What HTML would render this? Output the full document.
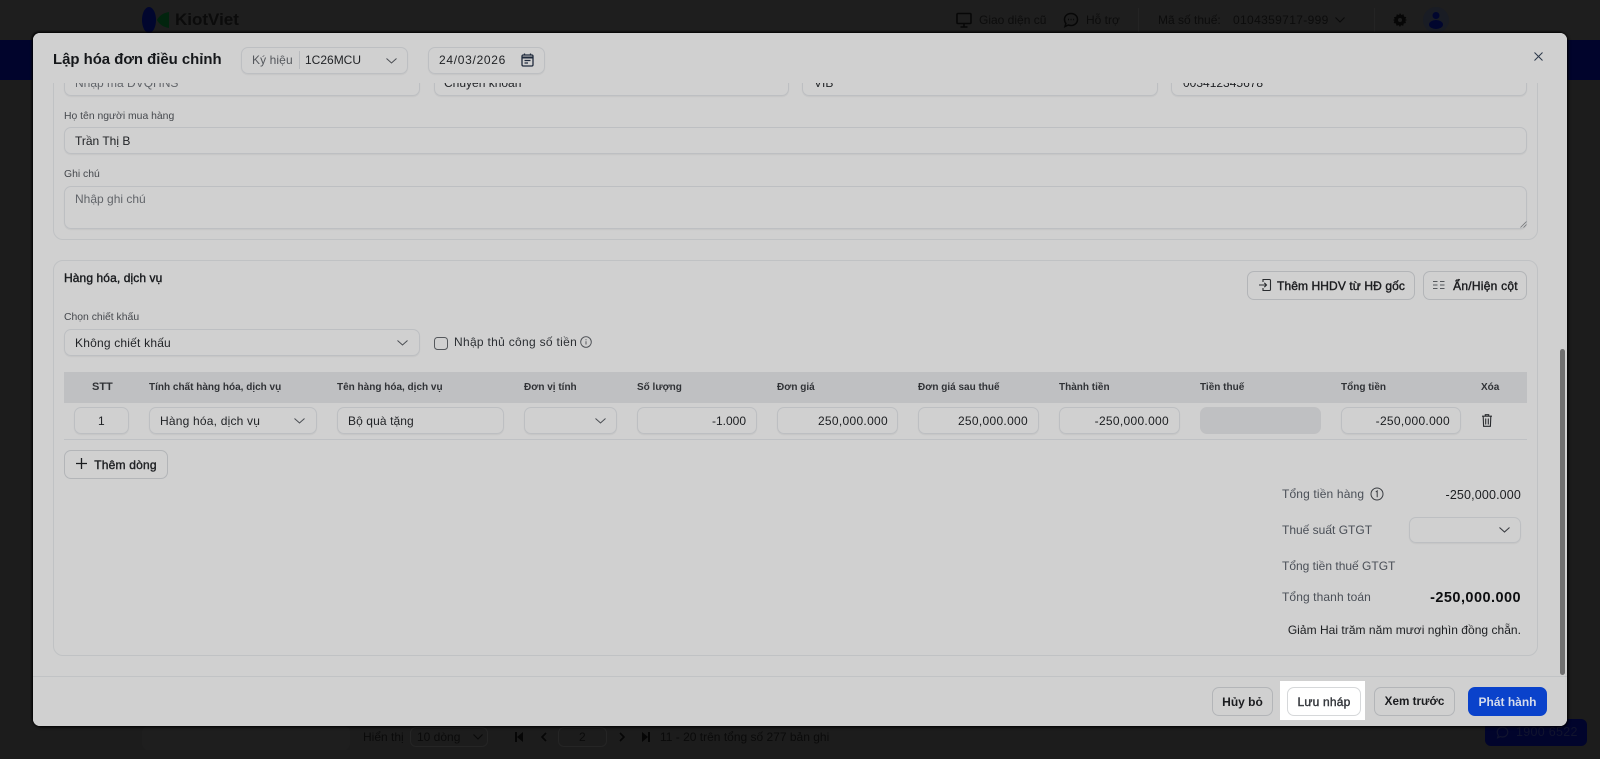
<!DOCTYPE html>
<html lang="vi">
<head>
<meta charset="utf-8">
<title>Lập hóa đơn điều chỉnh</title>
<style>
html,body{margin:0;padding:0;width:1600px;height:759px;overflow:hidden;background:#1c1c1c;font-family:"Liberation Sans","Noto Sans CJK SC",sans-serif;}
*{box-sizing:border-box}
.a{position:absolute}
.t{position:absolute;white-space:nowrap;transform:translateY(-50%);line-height:16px;font-size:12px;color:#2c2f33}
.tr{position:absolute;white-space:nowrap;transform:translateY(-50%);line-height:16px;font-size:12.5px;color:#1c1e21;text-align:right}
.i{position:absolute;border:1px solid #bdbfc2;border-radius:7px;box-shadow:0 1px 1px rgba(0,0,0,.05)}
.h{font-size:10px;font-weight:bold;color:#303236}
.l{font-size:10.4px;color:#45484d}
.b{position:absolute;border:1px solid #b3b5b8;border-radius:7px;display:flex;align-items:center;justify-content:center;font-size:12px;font-weight:bold;color:#1b1c1f;white-space:nowrap}
.m{font-weight:normal;-webkit-text-stroke:.4px currentColor}
svg{position:absolute;display:block;overflow:visible}
</style>
</head>
<body>
<!-- background page -->
<div class="a" style="left:0;top:0;width:1600px;height:40px;background:#1e1e1e"></div>
<div class="a" style="left:0;top:40px;width:1600px;height:40px;background:#01042c"></div>
<svg style="left:142px;top:7px" width="28" height="26" viewBox="0 0 28 26"><ellipse cx="7" cy="13" rx="7" ry="13" fill="#01062e"/><path d="M15 13C17 9 21 6 27 5V21C21 20 17 17 15 13Z" fill="#02240e"/></svg>
<div class="t" style="left:175px;top:20px;font-size:17px;font-weight:bold;color:#0b0b0b">KiotViet</div>
<svg style="left:956px;top:12px" width="16" height="16" viewBox="0 0 16 16" fill="none" stroke="#070707" stroke-width="1.6"><rect x="1" y="1.5" width="14" height="10" rx="1"/><path d="M8 12v2.5M4.5 15h7"/></svg>
<div class="t" style="left:979px;top:20px;color:#0c0c0c;font-size:12px">Giao diện cũ</div>
<svg style="left:1063px;top:12px" width="16" height="16" viewBox="0 0 16 16" fill="none" stroke="#070707" stroke-width="1.5"><path d="M8 1.500c3.800 0 6.500 2.700 6.500 6s-2.700 6-6.500 6c-1 0-1.900-.2-2.700-.5L2 14.500l.9-3C2 10.400 1.500 9 1.500 7.500c0-3.300 2.700-6 6.500-6z"/><path d="M5 7.500h.9M7.600 7.500h.9M10.200 7.500h.9"/></svg>
<div class="t" style="left:1086px;top:20px;color:#0c0c0c;font-size:12px">Hỗ trợ</div>
<div class="a" style="left:1138px;top:8px;width:1px;height:24px;background:#242424"></div>
<div class="t" style="left:1158px;top:20px;color:#0c0c0c;font-size:12px">Mã số thuế:</div>
<div class="t" style="left:1233px;top:20px;color:#0c0c0c;font-size:12px;letter-spacing:.35px">0104359717-999</div>
<svg style="left:1335px;top:17px" width="10" height="6" viewBox="0 0 10 6" fill="none" stroke="#0a0a0a"><path d="M.5.500L5 5 9.500.500"/></svg>
<div class="a" style="left:1374px;top:8px;width:1px;height:24px;background:#242424"></div>
<svg style="left:1393px;top:13px" width="14" height="14" viewBox="0 0 14 14"><path d="M7 0l1.300 2 2.200-.7.500 2.300 2.300.5L12.300 6.300 14 7l-1.700.8.700 2.200-2.300.5-.5 2.300-2.200-.7L7 14l-1.300-1.900-2.200.7-.5-2.300-2.300-.5.700-2.200L0 7l1.700-.7L1 4.100l2.300-.5.500-2.300 2.200.7z" fill="#060606"/><circle cx="7" cy="7" r="2" fill="#1e1e1e"/></svg>
<div class="a" style="left:1423px;top:7px;width:26px;height:26px;border-radius:50%;background:#191c24"></div>
<svg style="left:1428px;top:11px" width="16" height="18" viewBox="0 0 16 18" fill="#01062e"><circle cx="8" cy="4.500" r="3.500"/><ellipse cx="8" cy="13.500" rx="7" ry="4.500"/></svg>

<!-- pagination -->
<div class="a" style="left:142px;top:726px;width:208px;height:24px;background:#1e1e1e;border-radius:6px"></div>
<div class="t" style="left:363px;top:737px;color:#0a0a0a;font-size:12px">Hiển thị</div>
<div class="a" style="left:410px;top:727px;width:78px;height:20px;border:1px solid #252525;border-radius:6px"></div>
<div class="t" style="left:417px;top:737px;color:#0a0a0a;font-size:12px">10 dòng</div>
<svg style="left:473px;top:734px" width="10" height="6" viewBox="0 0 10 6" fill="none" stroke="#0a0a0a"><path d="M.5.500L5 5 9.500.500"/></svg>
<svg style="left:515px;top:732px" width="8" height="10" viewBox="0 0 8 10" fill="#060606"><rect x="0" y="0" width="2" height="10"/><path d="M8 0v10L2 5z"/></svg>
<svg style="left:541px;top:732px" width="6" height="10" viewBox="0 0 6 10" fill="none" stroke="#060606" stroke-width="1.600"><path d="M5 1L1 5l4 4"/></svg>
<div class="a" style="left:558px;top:727px;width:49px;height:20px;border:1px solid #252525;border-radius:6px"></div>
<div class="t" style="left:579px;top:737px;color:#0a0a0a;font-size:12px">2</div>
<svg style="left:619px;top:732px" width="6" height="10" viewBox="0 0 6 10" fill="none" stroke="#060606" stroke-width="1.600"><path d="M1 1l4 4-4 4"/></svg>
<svg style="left:642px;top:732px" width="8" height="10" viewBox="0 0 8 10" fill="#060606"><rect x="6" y="0" width="2" height="10"/><path d="M0 0v10l6-5z"/></svg>
<div class="t" style="left:660px;top:737px;color:#0a0a0a;font-size:12px">11 - 20 trên tổng số 277 bản ghi</div>
<div class="a" style="left:1485px;top:719px;width:102px;height:27px;background:#01042c;border-radius:6px"></div>
<svg style="left:1496px;top:726px" width="13" height="13" viewBox="0 0 16 16" fill="none" stroke="#11142e" stroke-width="1.500"><path d="M8 1.500c3.800 0 6.500 2.700 6.500 6s-2.700 6-6.500 6c-1 0-1.900-.2-2.700-.5L2 14.500l.9-3C2 10.400 1.500 9 1.500 7.500c0-3.300 2.700-6 6.500-6z"/></svg>
<div class="t" style="left:1516px;top:732px;color:#11142e;font-size:12.500px;letter-spacing:.3px">1900 6522</div>

<!-- modal -->
<div class="a" style="left:33px;top:33px;width:1534px;height:693px;background:#d0d0d0;border-radius:7px;box-shadow:-1px -1px 2px #000,1px 1px 3px #000;overflow:hidden">
<div style="position:absolute;left:-33px;top:-33px;width:1600px;height:759px">

<!-- first row clipped -->
<div class="i" style="left:64px;top:69px;width:356px;height:27px"></div>
<div class="t" style="left:75px;top:83px;color:#62656a">Nhập mã ĐVQHNS</div>
<div class="i" style="left:434px;top:69px;width:355px;height:27px"></div>
<div class="t" style="left:444px;top:83px;color:#1f2124">Chuyển khoản</div>
<div class="i" style="left:802px;top:69px;width:356px;height:27px"></div>
<div class="t" style="left:814px;top:83px;color:#1f2124">VIB</div>
<div class="i" style="left:1171px;top:69px;width:356px;height:27px"></div>
<div class="t" style="left:1183px;top:83px;color:#1f2124">003412345678</div>
<div class="a" style="left:53px;top:60px;width:1485px;height:180px;border:1px solid #c0c2c4;border-radius:10px"></div>

<div class="t l" style="left:64px;top:117px">Họ tên người mua hàng</div>
<div class="i" style="left:64px;top:127px;width:1463px;height:27px"></div>
<div class="t" style="left:75px;top:141px;color:#1f2124">Trần Thị B</div>
<div class="t l" style="left:64px;top:175px">Ghi chú</div>
<div class="i" style="left:64px;top:186px;width:1463px;height:43px"></div>
<div class="t" style="left:75px;top:199px;color:#62656a">Nhập ghi chú</div>
<svg style="left:1520px;top:221px" width="7" height="7" viewBox="0 0 7 7" stroke="#77797c" fill="none" stroke-width=".8"><path d="M.5 6.500l6-6M3.500 6.500l3-3"/></svg>

<!-- section 2 -->
<div class="a" style="left:53px;top:260px;width:1485px;height:396px;border:1px solid #c0c2c4;border-radius:10px"></div>
<div class="t m" style="left:64px;top:278px;font-size:12px;letter-spacing:.1px;color:#1a1c1f">Hàng hóa, dịch vụ</div>
<div class="b m" style="left:1247px;top:271px;width:168px;height:29px;padding-left:20px;letter-spacing:.1px">Thêm HHDV từ HĐ gốc</div>
<svg style="left:1258px;top:278px" width="14" height="14" viewBox="0 0 14 14" fill="none" stroke="#2a2c2f" stroke-width="1.100"><path d="M5 4V1.500h6.500a1 1 0 0 1 1 1v9a1 1 0 0 1-1 1H5V10"/><path d="M1 7h7.500M6.300 4.800L8.500 7 6.300 9.200"/></svg>
<div class="b m" style="left:1423px;top:271px;width:104px;height:29px;padding-left:21px;letter-spacing:.25px">Ẩn/Hiện cột</div>
<svg style="left:1433px;top:280px" width="12" height="10" viewBox="0 0 12 10" fill="none" stroke="#55585c"><path d="M0 1.500h4.500M0 5h4.500M0 8.500h4.500M7 1.500h4.500M7 5h4.500M7 8.500h4.500"/></svg>

<div class="t l" style="left:64px;top:318px">Chọn chiết khấu</div>
<div class="i" style="left:64px;top:329px;width:356px;height:27px"></div>
<div class="t" style="left:75px;top:343px;color:#1f2124;letter-spacing:.2px">Không chiết khấu</div>
<svg style="left:397px;top:340px" width="11" height="6" viewBox="0 0 11 6" fill="none" stroke="#4a4d52"><path d="M.5.500L5.500 5 10.500.500"/></svg>
<div class="a" style="left:434px;top:337px;width:14px;height:13px;border:1px solid #55585c;border-radius:3.500px"></div>
<div class="t" style="left:454px;top:342px;color:#2c2f33;font-size:12px;letter-spacing:.3px">Nhập thủ công số tiền</div>
<svg style="left:580px;top:336px" width="12" height="12" viewBox="0 0 12 12" fill="none" stroke="#4a4d52" stroke-width=".9"><circle cx="6" cy="6" r="5.300"/><path d="M6 5.300v3.200M6 3.200v1"/></svg>

<!-- table -->
<div class="a" style="left:64px;top:372px;width:1463px;height:31px;background:#bfc0c2"></div>
<div class="t h" style="left:92px;top:387px;font-size:11px">STT</div>
<div class="t h" style="left:149px;top:388px">Tính chất hàng hóa, dịch vụ</div>
<div class="t h" style="left:337px;top:388px">Tên hàng hóa, dịch vụ</div>
<div class="t h" style="left:524px;top:388px">Đơn vị tính</div>
<div class="t h" style="left:637px;top:388px">Số lượng</div>
<div class="t h" style="left:777px;top:388px">Đơn giá</div>
<div class="t h" style="left:918px;top:388px">Đơn giá sau thuế</div>
<div class="t h" style="left:1059px;top:388px">Thành tiền</div>
<div class="t h" style="left:1200px;top:388px">Tiền thuế</div>
<div class="t h" style="left:1341px;top:388px">Tổng tiền</div>
<div class="t h" style="left:1481px;top:388px">Xóa</div>

<div class="i" style="left:74px;top:407px;width:55px;height:27px"></div>
<div class="t" style="left:98px;top:421px;color:#1f2124">1</div>
<div class="i" style="left:149px;top:407px;width:168px;height:27px"></div>
<div class="t" style="left:160px;top:421px;color:#1f2124;letter-spacing:.2px">Hàng hóa, dịch vụ</div>
<svg style="left:294px;top:418px" width="11" height="6" viewBox="0 0 11 6" fill="none" stroke="#4a4d52"><path d="M.5.500L5.500 5 10.500.500"/></svg>
<div class="i" style="left:337px;top:407px;width:167px;height:27px"></div>
<div class="t" style="left:348px;top:421px;color:#1f2124;letter-spacing:.1px">Bộ quà tặng</div>
<div class="i" style="left:524px;top:407px;width:93px;height:27px"></div>
<svg style="left:595px;top:418px" width="11" height="6" viewBox="0 0 11 6" fill="none" stroke="#4a4d52"><path d="M.5.500L5.500 5 10.500.500"/></svg>
<div class="i" style="left:637px;top:407px;width:120px;height:27px"></div>
<div class="tr" style="right:854px;top:421px;font-size:12px">-1.000</div>
<div class="i" style="left:777px;top:407px;width:121px;height:27px"></div>
<div class="tr" style="right:712px;top:421px;font-size:12px;letter-spacing:.3px">250,000.000</div>
<div class="i" style="left:918px;top:407px;width:121px;height:27px"></div>
<div class="tr" style="right:572px;top:421px;font-size:12px;letter-spacing:.3px">250,000.000</div>
<div class="i" style="left:1059px;top:407px;width:121px;height:27px"></div>
<div class="tr" style="right:431px;top:421px;font-size:12px;letter-spacing:.3px">-250,000.000</div>
<div class="a" style="left:1200px;top:407px;width:121px;height:27px;background:#bfc0c2;border-radius:7px"></div>
<div class="i" style="left:1341px;top:407px;width:120px;height:27px"></div>
<div class="tr" style="right:150px;top:421px;font-size:12px;letter-spacing:.3px">-250,000.000</div>
<svg style="left:1482px;top:414px" width="10" height="13" viewBox="0 0 10 13" fill="none" stroke="#2a2c2f" stroke-width="1.100"><path d="M0 2.200h10M3.300 2V.7h3.400V2M1.200 2.500l.4 9.800h6.800l.4-9.800M3.700 4.500v6M6.300 4.500v6"/></svg>
<div class="a" style="left:64px;top:439px;width:1463px;height:1px;background:#bfc1c4"></div>

<div class="b m" style="left:64px;top:450px;width:104px;height:29px;padding-left:19px;letter-spacing:.2px;color:#1f2124">Thêm dòng</div>
<svg style="left:76px;top:458px" width="11" height="11" viewBox="0 0 11 11" stroke="#1a1c1f" stroke-width="1.300"><path d="M5.500 0v11M0 5.500h11"/></svg>

<!-- totals -->
<div class="t" style="left:1282px;top:494px;color:#4a4f57;font-size:12px;letter-spacing:.15px">Tổng tiền hàng</div>
<svg style="left:1370px;top:487px" width="14" height="14" viewBox="0 0 14 14" fill="none" stroke="#3a3d42"><circle cx="7" cy="7" r="6"/><path d="M5.800 5L7.200 3.900V10.300"/></svg>
<div class="tr" style="right:79px;top:495px;font-size:12.500px;letter-spacing:.15px">-250,000.000</div>
<div class="t" style="left:1282px;top:530px;color:#4a4f57;font-size:12px">Thuế suất GTGT</div>
<div class="i" style="left:1409px;top:517px;width:112px;height:26px"></div>
<svg style="left:1499px;top:527px" width="11" height="6" viewBox="0 0 11 6" fill="none" stroke="#3a3d42" stroke-width="1.100"><path d="M.5.500L5.500 5 10.500.500"/></svg>
<div class="t" style="left:1282px;top:566px;color:#4a4f57;font-size:12px">Tổng tiền thuế GTGT</div>
<div class="t" style="left:1282px;top:597px;color:#4a4f57;font-size:12px;letter-spacing:.1px">Tổng thanh toán</div>
<div class="tr" style="right:79px;top:598px;font-size:14.500px;font-weight:bold;letter-spacing:.45px;color:#0d0e10">-250,000.000</div>
<div class="tr" style="right:79px;top:630px;font-size:12px;letter-spacing:.03px">Giảm Hai trăm năm mươi nghìn đồng chẵn.</div>

<!-- scrollbar -->
<div class="a" style="left:1560px;top:349px;width:5px;height:326px;background:#6f6f6f;border-radius:3px"></div>

<!-- footer -->
<div class="a" style="left:33px;top:676px;width:1534px;height:50px;background:#d0d0d0;border-top:1px solid #c1c3c5"></div>
<div class="b" style="left:1212px;top:687px;width:61px;height:29px">Hủy bỏ</div>
<div class="a" style="left:1280px;top:681px;width:85px;height:39px;background:#fff"></div>
<div class="b m" style="left:1287px;top:687px;width:74px;height:29px;background:#fff;border-color:#d6d8da;color:#33363b;letter-spacing:.2px">Lưu nháp</div>
<div class="b" style="left:1374px;top:687px;width:81px;height:29px;font-size:11.700px">Xem trước</div>
<div class="b" style="left:1468px;top:687px;width:79px;height:29px;background:#0a42cb;border-color:#0a42cb;color:#d6dcec">Phát hành</div>

<!-- header -->
<div class="a" style="left:33px;top:33px;width:1534px;height:50px;background:#d0d0d0"></div>
<div class="t" style="left:53px;top:60px;font-size:14.900px;font-weight:bold;color:#15171a">Lập hóa đơn điều chỉnh</div>
<div class="i" style="left:241px;top:47px;width:167px;height:27px"></div>
<div class="t" style="left:252px;top:60px;color:#55585d;letter-spacing:.1px">Ký hiệu</div>
<div class="a" style="left:299px;top:51px;width:1px;height:18px;background:#b9bbbe"></div>
<div class="t" style="left:305px;top:60px;color:#1f2124">1C26MCU</div>
<svg style="left:386px;top:58px" width="11" height="6" viewBox="0 0 11 6" fill="none" stroke="#4a4d52"><path d="M.5.500L5.500 5 10.500.500"/></svg>
<div class="i" style="left:428px;top:47px;width:117px;height:27px"></div>
<div class="t" style="left:439px;top:60px;color:#1f2124;letter-spacing:.7px">24/03/2026</div>
<svg style="left:521px;top:53px" width="13" height="14" viewBox="0 0 13 14" fill="none" stroke="#1f2a3c" stroke-width="1.300"><rect x="1" y="2" width="11" height="11" rx="1.200"/><path d="M1 4.500h11" stroke-width="2"/><path d="M3.500.500v2M9.500.500v2M3.500 7.500h6M3.500 10h3.500"/></svg>
<svg style="left:1534px;top:52px" width="9" height="9" viewBox="0 0 9 9" stroke="#2b3648" stroke-width="1"><path d="M.5.500l8 8M8.500.500l-8 8"/></svg>
</div>
</div>
</body>
</html>
